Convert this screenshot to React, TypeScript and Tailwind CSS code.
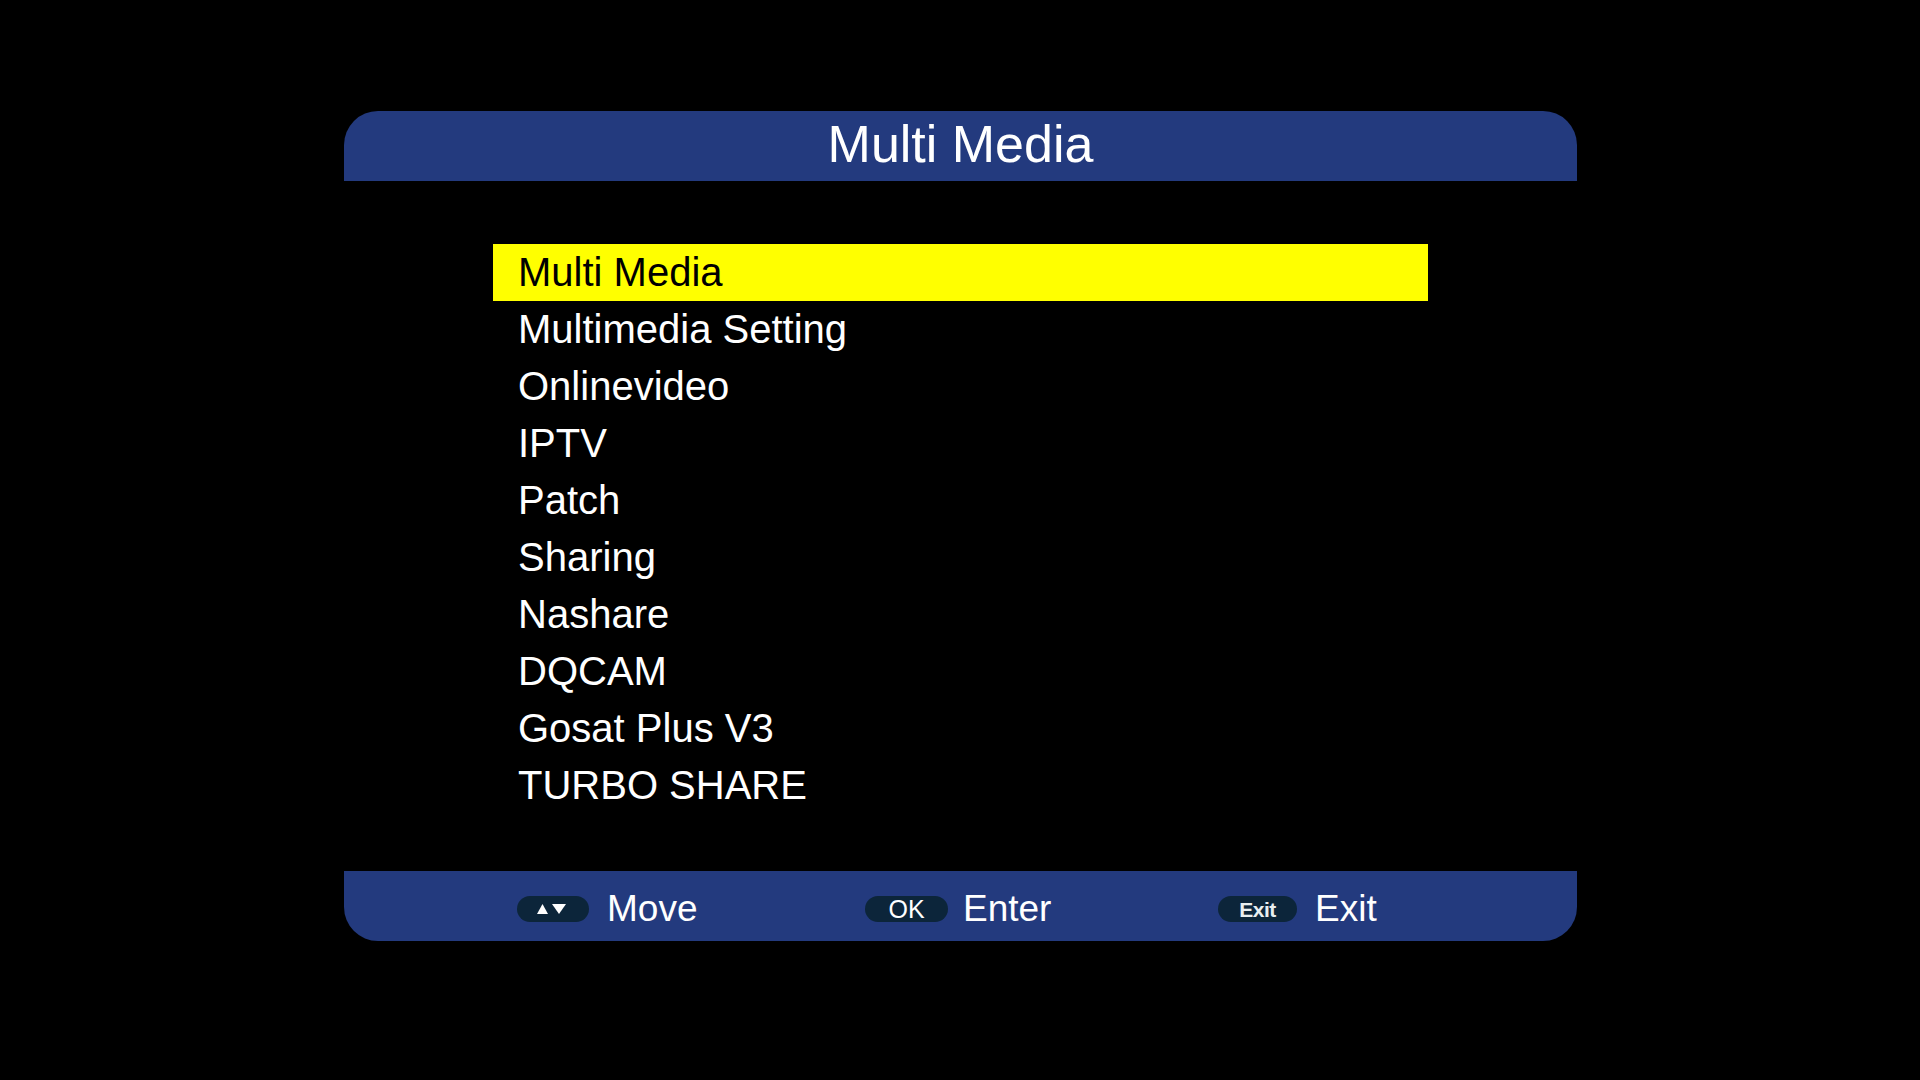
import React from "react";

const menuItems = [
  "Multi Media",
  "Multimedia Setting",
  "Onlinevideo",
  "IPTV",
  "Patch",
  "Sharing",
  "Nashare",
  "DQCAM",
  "Gosat Plus V3",
  "TURBO SHARE",
];

const ArrowsIcon = () => (
  <svg width="32" height="12" viewBox="0 0 32 12" fill="#ffffff">
    <polygon points="0,11 5.5,1 11,11" />
    <polygon points="15,1 29,1 22,11" />
  </svg>
);

const Pill: React.FC<{ children: React.ReactNode; className?: string }> = ({ children, className }) => (
  <div
    className={
      "flex h-[26px] items-center justify-center rounded-full bg-[#0c253a] " + (className ?? "")
    }
  >
    {children}
  </div>
);

const App: React.FC = () => {
  const selected = 0;

  return (
    <div
      className="flex h-[1080px] w-[1920px] flex-col bg-black pt-[111px] pl-[344px]"
      style={{ fontFamily: '"Liberation Sans", Arial, sans-serif' }}
    >
      <div className="flex w-[1233px] flex-col">
        {/* title bar */}
        <div className="flex h-[70px] items-start justify-center rounded-t-[34px] bg-[#233a7e]">
          <span className="text-[52px] leading-[66px] text-white">Multi Media</span>
        </div>

        {/* menu */}
        <div className="mt-[63px] ml-[149px] flex w-[935px] flex-col">
          {menuItems.map((item, i) => (
            <div
              key={item}
              className={
                i === selected
                  ? "h-[57px] bg-[#ffff00] pl-[25px] text-[40px] leading-[57px] text-black"
                  : "h-[57px] pl-[25px] text-[40px] leading-[57px] text-white"
              }
            >
              {item}
            </div>
          ))}
        </div>

        {/* help bar */}
        <div className="mt-[57px] flex h-[70px] items-center rounded-b-[34px] bg-[#233a7e] pt-[6px] pl-[173px] text-[37px] text-white">
          <div className="flex w-[348px] items-center gap-[18px]">
            <Pill className="w-[72px]">
              <ArrowsIcon />
            </Pill>
            <span>Move</span>
          </div>
          <div className="flex w-[353px] items-center gap-[15px]">
            <Pill className="w-[83px]">
              <span className="text-[25px] leading-none">OK</span>
            </Pill>
            <span>Enter</span>
          </div>
          <div className="flex items-center gap-[18px]">
            <Pill className="w-[79px]">
              <span className="text-[21px] leading-none font-bold tracking-tight text-[#e8eef0]">Exit</span>
            </Pill>
            <span>Exit</span>
          </div>
        </div>
      </div>
    </div>
  );
};

export default App;
